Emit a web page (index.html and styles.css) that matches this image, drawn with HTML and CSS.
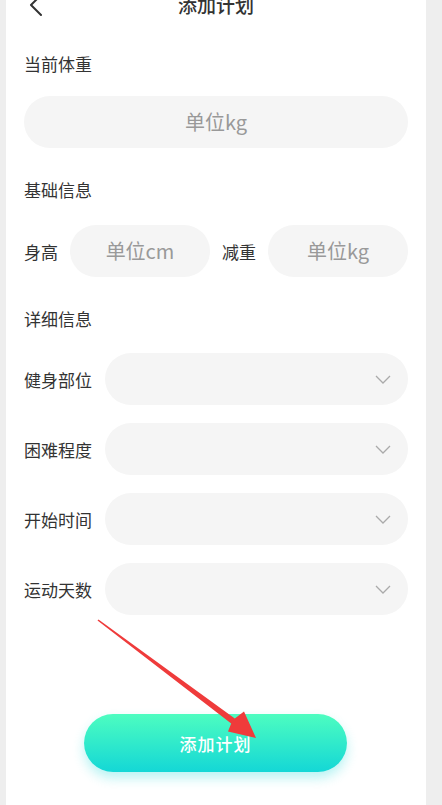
FILE: index.html
```html
<!DOCTYPE html>
<html lang="zh-CN">
<head>
  <meta charset="UTF-8">
  <meta name="viewport" content="width=device-width, initial-scale=1.0">
  <title>添加计划</title>
  <link rel="stylesheet" href="styles.css">
</head>
<body>
  <div class="page">
    <header class="nav">
      <span class="back">
        <svg width="14" height="24" viewBox="0 0 14 24"><path d="M12 2 L2 12 L12 22" fill="none" stroke="#333" stroke-width="2" stroke-linecap="round" stroke-linejoin="round"/></svg>
      </span>
      <h1>添加计划</h1>
    </header>

    <div class="section-title first">当前体重</div>
    <div class="field wide">单位kg</div>

    <div class="section-title">基础信息</div>
    <div class="row">
      <span class="label short">身高</span>
      <div class="field">单位cm</div>
      <span class="label short">减重</span>
      <div class="field">单位kg</div>
    </div>

    <div class="section-title">详细信息</div>
    <div class="select-list">
      <div class="row">
        <span class="label">健身部位</span>
        <div class="field select"><svg class="chev" width="16" height="9" viewBox="0 0 16 9"><path d="M1 1 L8 8 L15 1" fill="none" stroke="#aaa" stroke-width="1.3"/></svg></div>
      </div>
      <div class="row">
        <span class="label">困难程度</span>
        <div class="field select"><svg class="chev" width="16" height="9" viewBox="0 0 16 9"><path d="M1 1 L8 8 L15 1" fill="none" stroke="#aaa" stroke-width="1.3"/></svg></div>
      </div>
      <div class="row">
        <span class="label">开始时间</span>
        <div class="field select"><svg class="chev" width="16" height="9" viewBox="0 0 16 9"><path d="M1 1 L8 8 L15 1" fill="none" stroke="#aaa" stroke-width="1.3"/></svg></div>
      </div>
      <div class="row">
        <span class="label">运动天数</span>
        <div class="field select"><svg class="chev" width="16" height="9" viewBox="0 0 16 9"><path d="M1 1 L8 8 L15 1" fill="none" stroke="#aaa" stroke-width="1.3"/></svg></div>
      </div>
    </div>

    <div class="actions">
      <button class="submit">添加计划</button>
    </div>
  </div>

  <!-- annotation arrow drawn over the page -->
  <svg class="arrow" width="442" height="805" viewBox="0 0 442 805">
    <polygon points="97.5,620.6 98.5,619.4 234.8,718.4 244,711.5 256,738 228,731.5 231.2,723.6" fill="#ef3b3b"/>
  </svg>
</body>
</html>
```

FILE: styles.css
```css
body {
  margin: 0;
  background-color: #eeeeee;
  font-family: "Noto Sans CJK SC", "Noto Sans", sans-serif;
  color: #333;
  position: relative;
}
.page {
  display: flow-root;
  overflow: hidden;
  margin: 0 16px 0 6px;
  padding: 0 18px;
  min-height: 805px;
  background-color: #fff;
}
.nav {
  position: relative;
  height: 44px;
  margin-top: -17px;
  text-align: center;
}
.nav h1 {
  margin: 0;
  font-size: 19px;
  font-weight: 500;
  line-height: 44px;
}
.back {
  position: absolute;
  left: 5px;
  top: 10px;
}
.section-title {
  font-size: 17px;
  line-height: 24px;
  margin-top: 30px;
  margin-bottom: 23px;
}
.section-title.first {
  margin-top: 25px;
  margin-bottom: 20px;
}
.field {
  flex: 1;
  height: 52px;
  border-radius: 26px;
  background-color: #f5f5f5;
  color: #999;
  font-size: 20px;
  line-height: 52px;
  text-align: center;
}
.row {
  display: flex;
  align-items: center;
  gap: 12px;
}
.label {
  font-size: 17px;
  width: 69px;
  flex-shrink: 0;
}
.label.short {
  width: 34px;
}
.select-list {
  display: flex;
  flex-direction: column;
  gap: 18px;
  margin-top: -1px;
}
.select {
  display: flex;
  align-items: center;
  justify-content: flex-end;
  padding-right: 17px;
}
.actions {
  margin-top: 99px;
  padding-left: 60px;
}
.submit {
  width: 263px;
  height: 58px;
  border: none;
  border-radius: 29px;
  background: linear-gradient(to bottom, #4dfdc0, #14d7d6);
  box-shadow: 0 6px 12px rgba(20, 215, 214, 0.3);
  color: #fff;
  font-family: inherit;
  font-size: 17px;
  font-weight: 500;
  letter-spacing: 1px;
}
.arrow {
  position: absolute;
  left: 0;
  top: 0;
  pointer-events: none;
}
```
